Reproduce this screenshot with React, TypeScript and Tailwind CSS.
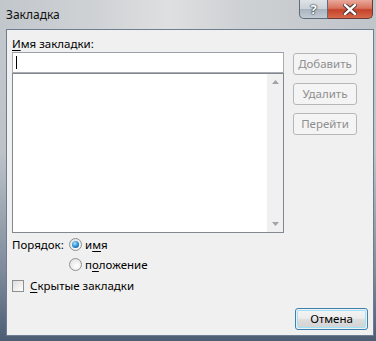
import React from "react";

function RadioDot({ checked }: { checked: boolean }) {
  return (
    <span className="relative inline-flex w-[13px] h-[13px] rounded-full border border-[#8e8f8f] bg-[radial-gradient(circle_at_60%_65%,#ffffff,#dcdcdc)] items-center justify-center shrink-0">
      {checked && (
        <span className="w-[7px] h-[7px] rounded-full bg-[radial-gradient(circle_at_40%_35%,#a8e4ff,#1b7fc8_60%,#0a4f8c)]" />
      )}
    </span>
  );
}

function DisabledBtn({ label }: { label: string }) {
  return (
    <div className="w-[64px] h-[22px] rounded-[3px] border border-[#b4b8bb] bg-[#f4f4f4] flex items-center justify-center text-[#8f8f8f] text-[11.5px] leading-none">
      {label}
    </div>
  );
}

export default function App() {
  return (
    <div className="w-[376px] h-[341px] overflow-hidden flex flex-col font-['Noto_Sans',sans-serif] text-black bg-[linear-gradient(to_bottom,#c4c9ce_0%,#bcc2c8_45%,#7d8a9a_80%,#4c5d74_100%)]">
      {/* title bar */}
      <div className="h-[29px] shrink-0 flex items-start bg-[linear-gradient(to_right,#c2c7cc_0%,#cfd2d5_25%,#dedfe0_45%,#cdd0d3_65%,#c0c5ca_100%)]">
        <span className="ml-[6px] mt-[7px] text-[12px] leading-[16px] text-[#111]">Закладка</span>
        <div className="ml-auto mr-[3px] flex">
          <div className="w-[29px] h-[19px] rounded-bl-[5px] border border-t-0 border-[#5f6b78] bg-[linear-gradient(to_bottom,#dfe3e7_0%,#cbd1d7_48%,#aab4be_52%,#c2cad3_100%)] flex items-center justify-center">
            <span className="text-white font-bold text-[13px] leading-none [text-shadow:0_0_2px_#2a3440,0_0_1px_#2a3440,0_0_1px_#2a3440]">?</span>
          </div>
          <div className="w-[45px] h-[19px] rounded-br-[5px] border border-t-0 border-l-0 border-[#6b3a36] bg-[linear-gradient(to_bottom,#e9a99b_0%,#d8735f_45%,#c4422a_55%,#d76a4c_100%)] flex items-center justify-center">
            <svg width="14" height="11" viewBox="0 0 14 11">
              <path d="M2 1 L12 10 M12 1 L2 10" stroke="#3a2a28" strokeWidth="4.2" strokeLinecap="square" />
              <path d="M2 1 L12 10 M12 1 L2 10" stroke="#ffffff" strokeWidth="2.4" strokeLinecap="square" />
            </svg>
          </div>
        </div>
      </div>

      {/* client area */}
      <div className="flex-1 ml-[6px] mr-[2px] mb-[5px] border border-[#6e7d8f] bg-[#f0f0f0] flex flex-col pl-[5px] pt-[7px] text-[11.5px] leading-[14px]">
        <div className="flex gap-[9px]">
          <div className="w-[272px] flex flex-col">
            <div className="h-[14px] leading-[14px]">
              <span className="underline underline-offset-2">И</span>мя закладки:
            </div>
            <div className="mt-[1px] h-[21px] border border-[#abadb3] border-t-[#9a9ea6] bg-white flex items-center pl-[3px]">
              <span className="w-px h-[13px] bg-black" />
            </div>
            <div className="h-[160px] border border-[#828790] bg-white flex justify-end">
              <div className="w-[16px] h-full bg-[#f0f0f0] flex flex-col items-center justify-between py-[6px]">
                <svg width="7" height="4" viewBox="0 0 7 4">
                  <path d="M0 4 L3.5 0 L7 4 Z" fill="#a3a3a3" />
                </svg>
                <svg width="7" height="4" viewBox="0 0 7 4">
                  <path d="M0 0 L3.5 4 L7 0 Z" fill="#a3a3a3" />
                </svg>
              </div>
            </div>
          </div>
          <div className="flex flex-col gap-[8px] pt-[16px]">
            <DisabledBtn label="Добавить" />
            <DisabledBtn label="Удалить" />
            <DisabledBtn label="Перейти" />
          </div>
        </div>

        {/* order */}
        <div className="mt-[5px] flex items-start">
          <span className="w-[57px] shrink-0 leading-[13px]">Порядок:</span>
          <div className="flex flex-col gap-[7px]">
            <div className="flex items-center gap-[3px] leading-[13px]">
              <RadioDot checked />
              <span>
                и<span className="underline underline-offset-2">м</span>я
              </span>
            </div>
            <div className="flex items-center gap-[3px] leading-[13px]">
              <RadioDot checked={false} />
              <span>
                п<span className="underline underline-offset-2">о</span>ложение
              </span>
            </div>
          </div>
        </div>

        <div className="mt-[8px] flex items-center gap-[6px] leading-[13px]">
          <span className="w-[12px] h-[12px] border border-[#8e8f8f] bg-[linear-gradient(135deg,#dcdcdc,#ffffff)] shrink-0" />
          <span>
            <span className="underline underline-offset-2">С</span>крытые закладки
          </span>
        </div>

        <div className="mt-auto mb-[5px] mr-[5px] flex justify-end">
          <div className="w-[73px] h-[22px] rounded-[3px] border border-[#3c7fb1] p-px bg-[#f0f0f0]">
            <div className="w-full h-full rounded-[2px] border border-[#9fe3fb] bg-[linear-gradient(to_bottom,#f3f3f3_0%,#ececec_45%,#dcdcdc_55%,#d4d4d4_100%)] flex items-center justify-center text-[11.5px] leading-none">
              Отмена
            </div>
          </div>
        </div>
      </div>
    </div>
  );
}
